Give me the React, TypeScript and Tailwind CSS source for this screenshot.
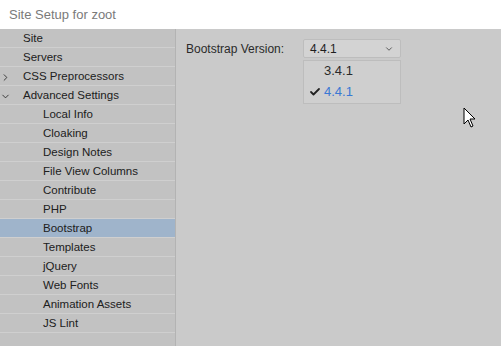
import { Check, ChevronDown, ChevronRight } from 'lucide-react';

const topItems = [
  { label: 'Site' },
  { label: 'Servers' },
  { label: 'CSS Preprocessors', toggle: 'closed' },
  { label: 'Advanced Settings', toggle: 'open' },
];

const subItems = [
  'Local Info',
  'Cloaking',
  'Design Notes',
  'File View Columns',
  'Contribute',
  'PHP',
  'Bootstrap',
  'Templates',
  'jQuery',
  'Web Fonts',
  'Animation Assets',
  'JS Lint',
];

export default function App() {
  const selected = 'Bootstrap';

  return (
    <div
      className="w-[501px] h-[346px] flex flex-col overflow-hidden bg-[#cacaca] text-[12px] text-[#1e1e1e]"
      style={{ fontFamily: '"Liberation Sans", Arial, sans-serif' }}
    >
      {/* Barra de título */}
      <div className="h-[29px] shrink-0 bg-white flex items-center pl-[9px] text-[13px] text-[#7a7a7a]">
        Site Setup for zoot
      </div>

      <div className="flex-1 flex min-h-0">
        {/* Categorias */}
        <div className="w-[176px] shrink-0 bg-[#c2c2c2] border-r border-[#b3b3b3] flex flex-col text-[11.5px] text-[#202020]">
          {topItems.map((item) => (
            <div
              key={item.label}
              className="h-[19px] flex items-center pt-[2px] border-b border-[#cfcfcf] relative pl-[23px]"
            >
              {item.toggle === 'closed' && (
                <ChevronRight className="absolute left-[0px] top-[5px] w-[11px] h-[11px] text-[#222]" strokeWidth={1.8} />
              )}
              {item.toggle === 'open' && (
                <ChevronDown className="absolute left-[0px] top-[5px] w-[11px] h-[11px] text-[#222]" strokeWidth={1.8} />
              )}
              {item.label}
            </div>
          ))}
          {subItems.map((label) => (
            <div
              key={label}
              className={
                label === selected
                  ? 'h-[19px] flex items-center pt-[2px] border-b border-[#cfcfcf] pl-[43px] bg-[#9fb4cb]'
                  : 'h-[19px] flex items-center pt-[2px] border-b border-[#cfcfcf] pl-[43px]'
              }
            >
              {label}
            </div>
          ))}
        </div>

        {/* Painel de configuração */}
        <div className="flex-1 relative">
          <div className="flex items-start pt-[10px] pl-[10px]">
            <div className="w-[117px] h-[19px] flex items-center text-[#2a2a2a]">Bootstrap Version:</div>
            <div className="flex flex-col w-[98px]">
              <div className="h-[19px] flex items-center justify-between pl-[6px] pr-[6px] bg-[#d3d3d3] border border-[#bdbdbd] rounded-[2px]">
                <span>4.4.1</span>
                <ChevronDown className="w-[10px] h-[10px] text-[#333]" strokeWidth={1.8} />
              </div>
              <div className="mt-[2px] h-[44px] bg-[#cfcfcf] border border-[#bdbdbd] flex flex-col">
                <div className="h-[20px] flex items-center pl-[20px] text-[13px] text-[#2a2a2a]">3.4.1</div>
                <div className="h-[22px] flex items-center pl-[5px] text-[13px] text-[#3a78d4]">
                  <Check className="w-[12px] h-[12px] text-[#222] mr-[3px]" strokeWidth={3.6} />
                  4.4.1
                </div>
              </div>
            </div>
          </div>

          {/* Cursor do mouse */}
          <svg
            className="absolute left-[287px] top-[78px]"
            width="14"
            height="22"
            viewBox="0 0 14 22"
          >
            <path
              d="M1 1 L1 17 L5 13 L8 20 L10 19 L7 12 L12 12 Z"
              fill="white"
              stroke="black"
              strokeWidth="1"
              strokeLinejoin="miter"
            />
          </svg>
        </div>
      </div>
    </div>
  );
}
